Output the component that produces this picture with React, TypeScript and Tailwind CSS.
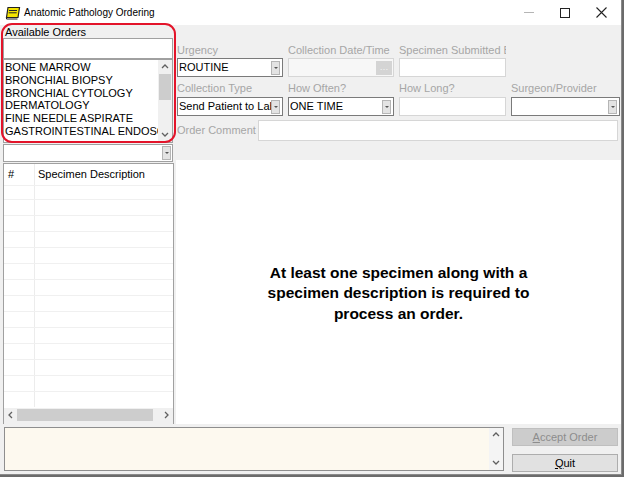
import React from "react";

const F = { fontFamily: '"Liberation Sans", Arial, sans-serif' };

function DropBtn() {
  return (
    <div className="w-[9px] h-[14px] bg-[#e3e3e3] border border-[#b5b5b5] flex items-center justify-center shrink-0">
      <div className="w-0 h-0 border-l-[2px] border-r-[2px] border-t-[2px] border-l-transparent border-r-transparent border-t-[#555]" />
    </div>
  );
}

function Combo({ value, w, dark = true }: { value?: string; w: string; dark?: boolean }) {
  return (
    <div className={`${w} h-[19px] bg-white border ${dark ? "border-[#7a7a7a]" : "border-[#d0d0d0]"} flex items-center pl-[1px] pr-[2px]`}>
      <span className="flex-1 text-[11px] text-black whitespace-nowrap overflow-hidden leading-[13px]">{value}</span>
      <DropBtn />
    </div>
  );
}

function Label({ children, w }: { children: React.ReactNode; w: string }) {
  return (
    <div className={`${w} text-[11px] leading-[13px] text-[#a6a6a6] whitespace-nowrap overflow-hidden`}>{children}</div>
  );
}

function Chev({ dir }: { dir: "up" | "down" | "left" | "right" }) {
  const p =
    dir === "up" ? "M1 5 L4 2 L7 5" : dir === "down" ? "M1 2 L4 5 L7 2" : dir === "left" ? "M5 1 L2 4 L5 7" : "M2 1 L5 4 L2 7";
  return (
    <svg width="8" height="8" viewBox="0 0 8 8">
      <path d={p} fill="none" stroke="#606060" strokeWidth="1.3" />
    </svg>
  );
}

export default function App() {
  const orders = [
    "BONE MARROW",
    "BRONCHIAL BIOPSY",
    "BRONCHIAL CYTOLOGY",
    "DERMATOLOGY",
    "FINE NEEDLE ASPIRATE",
    "GASTROINTESTINAL ENDOSCOPY",
  ];
  return (
    <div className="w-[624px] h-[477px] bg-[#6b6b6b] overflow-hidden" style={F}>
      <div className="w-[622px] h-[475px] bg-[#f0f0f0] border-r border-b border-[#8a8a8a] flex flex-col relative">
        {/* Title bar */}
        <div className="h-[25px] bg-white flex items-center shrink-0">
          <svg width="16" height="14" viewBox="0 0 16 14" className="ml-[5px] mr-[3px]">
            <path d="M3 1.5 L14.5 1.5 L13 11.5 L1.5 11.5 Z" fill="#f5e400" stroke="#222" strokeWidth="1.2" />
            <path d="M4 4.5 L12 4.5 M3.7 6.8 L11.7 6.8" stroke="#222" strokeWidth="1" />
            <path d="M1.5 11.5 L1.5 13 L12.5 13" fill="none" stroke="#222" strokeWidth="1" />
          </svg>
          <span className="text-[10px] text-black">Anatomic Pathology Ordering</span>
          <div className="flex-1" />
          <div className="w-[36px] flex justify-center">
            <div className="w-[10px] h-px bg-[#b5b5b5]" />
          </div>
          <div className="w-[36px] flex justify-center">
            <div className="w-[10px] h-[10px] border border-[#222]" />
          </div>
          <div className="w-[36px] flex justify-center mr-[2px]">
            <svg width="11" height="11" viewBox="0 0 11 11">
              <path d="M0.5 0.5 L10.5 10.5 M10.5 0.5 L0.5 10.5" stroke="#222" strokeWidth="1.1" />
            </svg>
          </div>
        </div>

        {/* Main */}
        <div className="flex h-[399px] shrink-0">
          {/* Left column */}
          <div className="w-[176px] flex flex-col">
            <div className="pl-[5px] pt-[1px] h-[13px] text-[11px] leading-[13px] text-black">Available Orders</div>
            <div className="ml-[3px] w-[170px] h-[21px] bg-white border border-[#a0a0a0]" />
            <div className="ml-[3px] w-[170px] h-[84px] bg-white border border-[#a0a0a0] flex">
              <div className="flex-1 pl-[1px] pt-[1px] overflow-hidden">
                {orders.map((o) => (
                  <div key={o} className="text-[11px] leading-[12.8px] text-black whitespace-nowrap">{o}</div>
                ))}
              </div>
              <div className="w-[14px] bg-[#f0f0f0] flex flex-col items-center">
                <div className="h-[14px] flex items-center"><Chev dir="up" /></div>
                <div className="w-[12px] h-[26px] bg-[#cdcdcd]" />
                <div className="flex-1" />
                <div className="h-[14px] flex items-center"><Chev dir="down" /></div>
              </div>
            </div>
            <div className="ml-[3px] mt-[1px] w-[170px] h-[18px] bg-white border border-[#a0a0a0] flex items-center justify-end pr-[1px]">
              <DropBtn />
            </div>
            {/* Grid */}
            <div className="ml-[3px] mt-[1px] w-[171px] flex-1 bg-white border border-[#a0a0a0] border-b-0 flex flex-col overflow-hidden">
              <div className="flex h-[22px] items-center border-b border-[#f0f0f0]">
                <div className="w-[31px] h-full border-r border-[#ececec] pl-[4px] flex items-center text-[11px] text-black">#</div>
                <div className="pl-[3px] text-[11px] text-black">Specimen Description</div>
              </div>
              <div className="h-[13px] flex"><div className="w-[31px] border-r border-[#ececec]" /></div>
              {Array.from({ length: 13 }).map((_, i) => (
                <div key={i} className="h-[16px] flex border-t border-[#f0f0f0] shrink-0">
                  <div className="w-[31px] border-r border-[#ececec]" />
                </div>
              ))}
              <div className="flex-1" />
              <div className="h-[14px] bg-[#f0f0f0] flex items-center shrink-0">
                <div className="w-[13px] flex justify-center"><Chev dir="left" /></div>
                <div className="w-[136px] h-[12px] bg-[#cdcdcd]" />
                <div className="flex-1" />
                <div className="w-[13px] flex justify-center"><Chev dir="right" /></div>
              </div>
              <div className="h-[2px] bg-[#f0f0f0] shrink-0" />
            </div>
          </div>

          {/* Right area */}
          <div className="flex-1 flex flex-col">
            <div className="h-[135px] bg-[#f0f0f0] pl-[1px] pt-[19px] flex flex-col">
              <div className="flex gap-[5px]">
                <Label w="w-[106px]">Urgency</Label>
                <Label w="w-[106px]">Collection Date/Time</Label>
                <Label w="w-[107px]">Specimen Submitted By</Label>
              </div>
              <div className="flex gap-[5px] mt-[1px]">
                <Combo value="ROUTINE" w="w-[106px]" />
                <div className="w-[106px] h-[19px] bg-[#f7f7f7] border border-[#d6d6d6] flex items-center justify-end pr-[1px]">
                  <div className="w-[16px] h-[14px] bg-[#d4d4d4] flex items-center justify-center text-[9px] leading-[9px] text-[#f4f4f4]">…</div>
                </div>
                <div className="w-[107px] h-[19px] bg-white border border-[#d6d6d6]" />
              </div>
              <div className="flex gap-[5px] mt-[5px]">
                <Label w="w-[106px]">Collection Type</Label>
                <Label w="w-[106px]">How Often?</Label>
                <Label w="w-[107px]">How Long?</Label>
                <Label w="w-[109px]">Surgeon/Provider</Label>
              </div>
              <div className="flex gap-[5px] mt-[2px]">
                <Combo value="Send Patient to Lab" w="w-[106px]" />
                <Combo value="ONE TIME" w="w-[106px]" />
                <div className="w-[107px] h-[19px] bg-white border border-[#d6d6d6]" />
                <Combo w="w-[109px]" />
              </div>
              <div className="flex items-center mt-[4px]">
                <Label w="w-[81px]">Order Comment</Label>
                <div className="w-[360px] h-[21px] bg-white border border-[#d6d6d6]" />
              </div>
            </div>
            <div className="flex-1 bg-white flex items-center justify-center pt-[3px]">
              <div className="text-center text-[15.5px] leading-[20.5px] font-bold text-black">
                At least one specimen along with a<br />
                specimen description is required to<br />
                process an order.
              </div>
            </div>
          </div>
        </div>

        {/* Bottom */}
        <div className="flex-1 flex pt-[3px]">
          <div className="ml-[4px] w-[500px] h-[44px] bg-[#fdf9ef] border border-[#8e8e8e] flex">
            <div className="flex-1" />
            <div className="w-[14px] flex flex-col items-center justify-between py-[3px] bg-[#f4f4f4]">
              <Chev dir="up" />
              <Chev dir="down" />
            </div>
          </div>
          <div className="ml-[8px] w-[106px] flex flex-col">
            <div className="mt-[1px] h-[18px] bg-[#cccccc] border border-[#bfbfbf] flex items-center justify-center text-[11px] text-[#8c8c8c]">
              <span><span className="underline">A</span>ccept Order</span>
            </div>
            <div className="mt-[8px] h-[18px] bg-[#e1e1e1] border border-[#adadad] flex items-center justify-center text-[11px] text-black">
              <span><span className="underline">Q</span>uit</span>
            </div>
          </div>
        </div>

        {/* Red highlight */}
        <div className="absolute left-[1px] top-[23px] w-[175px] h-[120px] border-2 border-[#e3142a] rounded-[11px] pointer-events-none" />
      </div>
    </div>
  );
}
